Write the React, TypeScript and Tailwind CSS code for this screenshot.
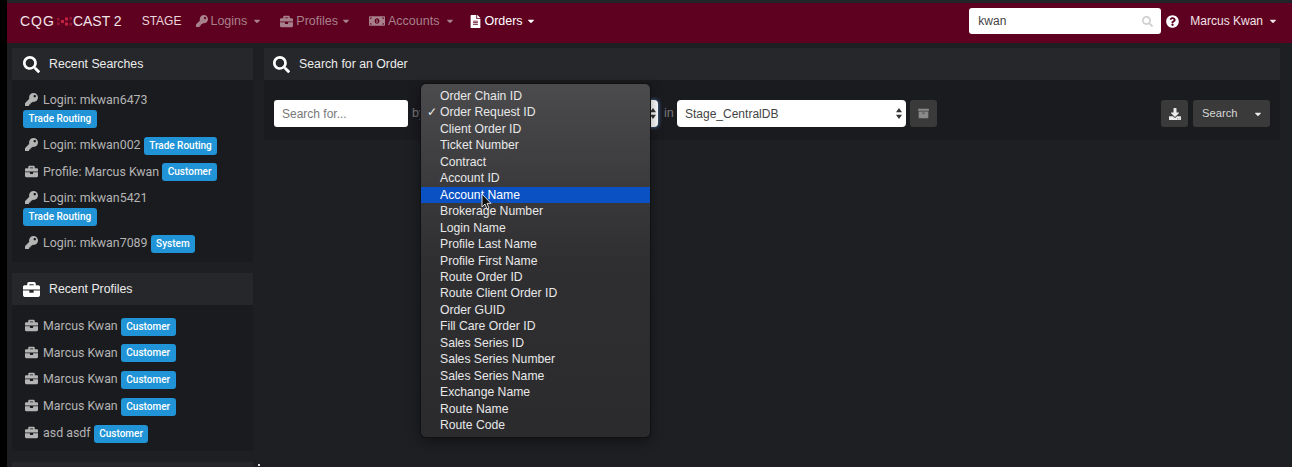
import { FaSearch, FaKey, FaBriefcase, FaMoneyBillAlt, FaFileAlt, FaQuestionCircle, FaDownload, FaArchive, FaCaretDown } from "react-icons/fa";

const font = "font-['Liberation_Sans',Arial,sans-serif]";

const recentSearches = [
  { icon: "key", text: "Login: mkwan6473", badge: "Trade Routing" },
  { icon: "key", text: "Login: mkwan002", badge: "Trade Routing" },
  { icon: "case", text: "Profile: Marcus Kwan", badge: "Customer" },
  { icon: "key", text: "Login: mkwan5421", badge: "Trade Routing" },
  { icon: "key", text: "Login: mkwan7089", badge: "System" },
];

const recentProfiles = ["Marcus Kwan", "Marcus Kwan", "Marcus Kwan", "Marcus Kwan", "asd asdf"];

const orderFields = [
  "Order Chain ID",
  "Order Request ID",
  "Client Order ID",
  "Ticket Number",
  "Contract",
  "Account ID",
  "Account Name",
  "Brokerage Number",
  "Login Name",
  "Profile Last Name",
  "Profile First Name",
  "Route Order ID",
  "Route Client Order ID",
  "Order GUID",
  "Fill Care Order ID",
  "Sales Series ID",
  "Sales Series Number",
  "Sales Series Name",
  "Exchange Name",
  "Route Name",
  "Route Code",
];

const Badge = ({ label }: { label: string }) => (
  <span className="inline-block h-[18px] rounded-[3px] bg-[#2094d6] px-[5.5px] align-middle font-['Roboto',sans-serif] text-[10px] leading-[18px] font-medium text-white">
    {label}
  </span>
);

const Row = ({ icon, text, badge }: { icon: string; text: string; badge: string }) => (
  <div className="mb-[8px] font-['Roboto',sans-serif] text-[12.4px] leading-[18.3px] text-[#b4b4b4]">
    {icon === "key" ? (
      <FaKey className="mr-[5px] ml-[2px] inline-block size-[13px] align-[-2px]" />
    ) : (
      <FaBriefcase className="mr-[5px] ml-[2px] inline-block size-[13px] align-[-2px]" />
    )}
    {text} <Badge label={badge} />
  </div>
);

const PanelHead = ({ icon, title, inset = "pl-[11px]" }: { icon: "search" | "case"; title: string; inset?: string }) => (
  <div className={`flex h-[32px] items-center gap-[9px] bg-[#26272b] pt-[1px] text-[12.3px] text-[#ececec] ${inset}`}>
    {icon === "search" ? <FaSearch className="size-[17px] text-white" /> : <FaBriefcase className="size-[17px] text-white" />}
    {title}
  </div>
);

const Caret = ({ className = "" }: { className?: string }) => <FaCaretDown className={`inline-block size-[10px] ${className}`} />;

const SelectArrows = () => (
  <svg width="6" height="11" viewBox="0 0 6 11" className="fill-[#333]">
    <path d="M3 0l3 4.3H0zM3 11L0 6.7h6z" />
  </svg>
);

const Logo = () => (
  <span className="flex items-center text-[14px] text-[#f1e4e8]">
    <span className="tracking-[1px]">CQG</span>
    <svg width="17" height="11" viewBox="0 0 17 11" className="ml-[1px] fill-[#c2213f]">
      <rect x="1" y="2" width="2.5" height="2.5" opacity="0.6" />
      <rect x="1" y="6.5" width="2.5" height="2.5" opacity="0.6" />
      <rect x="5" y="4" width="3" height="3" />
      <rect x="9" y="1.5" width="3" height="3" />
      <rect x="9" y="6.5" width="3" height="3" />
      <rect x="13.5" y="1" width="2.5" height="2.5" opacity="0.6" />
      <rect x="13.5" y="7" width="2.5" height="2.5" opacity="0.6" />
    </svg>
    CAST 2
  </span>
);

export default function App() {
  return (
    <div className={`${font} relative flex h-[467px] w-[1292px] overflow-hidden bg-[#1e1f23]`}>
      <div className="w-[7px] shrink-0 bg-black" />
      <div className="flex min-w-0 grow flex-col">
        <div className="h-[3px] shrink-0 bg-[#23242a]" />
        <nav className="flex h-[40px] shrink-0 items-center bg-[#5e001f] pr-[14px] pb-[4px] pl-[13px] text-[12.5px]">
          <Logo />
          <span className="ml-[20px] text-[12px] text-[#e9d5da]">STAGE</span>
          <span className="ml-[15px] flex items-center gap-[2px] text-[#a8808c]">
            <FaKey className="size-[12px]" /> Logins <Caret className="ml-[3px]" />
          </span>
          <span className="ml-[18px] flex items-center gap-[3px] text-[#a8808c]">
            <FaBriefcase className="size-[13px]" /> Profiles <Caret />
          </span>
          <span className="ml-[18px] flex items-center gap-[3px] text-[#a8808c]">
            <FaMoneyBillAlt className="size-[16px]" /> Accounts <Caret className="ml-[3px]" />
          </span>
          <span className="ml-[14px] flex items-center gap-[2px] text-white">
            <FaFileAlt className="size-[13px]" /> Orders <Caret className="ml-[1px]" />
          </span>
          <div className="ml-auto flex h-[26px] w-[192px] items-center justify-between rounded-[3px] bg-white pr-[8px] pl-[9px] text-[12px] text-[#444]">
            kwan
            <FaSearch className="size-[11px] text-[#d0d0d0]" />
          </div>
          <FaQuestionCircle className="ml-[5px] size-[13px] text-white" />
          <span className="ml-[11px] flex items-center gap-[5px] text-[12px] text-[#f1e4e8]">
            Marcus Kwan <Caret />
          </span>
        </nav>
        <div className="flex grow gap-[11px] pt-[5px] pr-[12px] pl-[5px]">
          <aside className="flex w-[241px] shrink-0 flex-col gap-[11px]">
            <section>
              <PanelHead icon="search" title="Recent Searches" />
              <div className="h-[182px] bg-[#1a1b1f] pt-[11px] pr-[30px] pl-[11px]">
                {recentSearches.map((r) => (
                  <Row key={r.text} icon={r.icon} text={r.text} badge={r.badge} />
                ))}
              </div>
            </section>
            <section>
              <PanelHead icon="case" title="Recent Profiles" />
              <div className="h-[146px] bg-[#1a1b1f] pt-[12px] pr-[30px] pl-[11px]">
                {recentProfiles.map((name, i) => (
                  <Row key={i} icon="case" text={name} badge="Customer" />
                ))}
              </div>
            </section>
            <section className="grow bg-[#26272b]" />
          </aside>
          <main className="grow">
            <PanelHead icon="search" title="Search for an Order" inset="pl-[9px]" />
            <div className="flex h-[60px] items-center bg-[#1a1b1f] px-[10px] pt-[7px] text-[12.5px]">
              <div className="flex h-[27px] w-[134px] items-center rounded-[3px] bg-white pl-[8px] text-[12px] text-[#777]">Search for...</div>
              <span className="ml-[4px] w-[13px] text-[#777]">by</span>
              <div className="relative flex h-[27px] w-[233px] items-center justify-end rounded-[4px] bg-white pr-[2px] shadow-[0_0_4px_#5b8fd0]">
                <SelectArrows />
                <div className="absolute -top-[16px] -left-[4px] z-10 w-[229px] rounded-[5px] bg-gradient-to-b from-[#4b4b4d] via-[#2f2f32] to-[#2b2b2e] pt-[4px] pb-[3px] text-[12.2px] leading-[16.45px] text-[#e8e8e8] shadow-[0_0_0_1px_#111,0_4px_14px_rgba(0,0,0,0.45)]">
                  {orderFields.map((field, i) => (
                    <div key={field} className={`relative pl-[19px] ${i === 6 ? "bg-[#0a51c4] text-white" : ""}`}>
                      {i === 1 && <span className="absolute left-[6px]">✓</span>}
                      {field}
                    </div>
                  ))}
                  <svg width="11" height="16" viewBox="0 0 11 16" className="absolute top-[110px] left-[60px]">
                    <path d="M1 0v13l3-3 2 5 2-1-2-4.6h4z" fill="#111" stroke="#fff" strokeWidth="0.8" />
                  </svg>
                </div>
              </div>
              <span className="ml-[6px] w-[13px] text-[#777]">in</span>
              <div className="flex h-[27px] w-[229px] items-center justify-between rounded-[4px] bg-white pr-[4px] pl-[8px] text-[12px] text-[#444]">
                Stage_CentralDB
                <SelectArrows />
              </div>
              <button className="ml-[4px] flex size-[27px] items-center justify-center rounded-[3px] bg-[#3a3a3a]">
                <FaArchive className="size-[11px] text-[#8a8a8a]" />
              </button>
              <button className="ml-auto flex size-[27px] items-center justify-center rounded-[3px] bg-[#3a3a3a]">
                <FaDownload className="size-[12px] text-[#ececec]" />
              </button>
              <button className="ml-[5px] flex h-[27px] w-[77px] items-center justify-between rounded-[3px] bg-[#3a3a3a] pr-[7px] pl-[9px] text-[11.2px] text-[#d8d8d8]">
                Search <Caret className="text-[#ececec]" />
              </button>
            </div>
          </main>
        </div>
      </div>
      <div className="absolute top-[464px] left-[258px] size-[2px] bg-[#ddd]" />
    </div>
  );
}
